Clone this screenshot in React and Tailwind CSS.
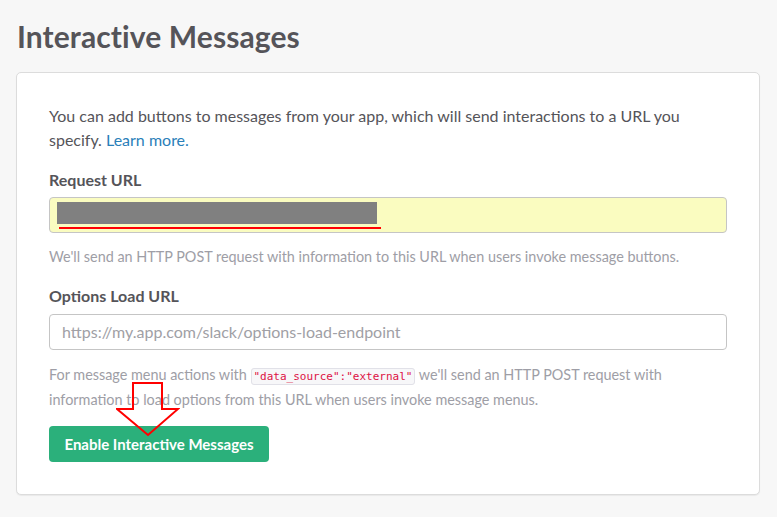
import React from 'react';

const Arrow = () => (
  <svg
    className="absolute left-[116px] top-[382px] pointer-events-none"
    width="64"
    height="56"
    viewBox="116 382 64 56"
  >
    <polygon
      points="133,383 162,383 162,409 178,409 148,435 117,409 133,409"
      fill="none"
      stroke="#ff0000"
      strokeWidth="2"
    />
  </svg>
);

const App = () => {
  return (
    <div className="relative min-h-[517px] bg-[#f7f7f7] px-4 pt-[14px] pb-[22px] font-['Lato','Noto_Sans',sans-serif] text-[#555459]">
      <h1 className="text-[30px] font-bold leading-[44px] tracking-[0.1px] text-[#555459] pl-px">
        Interactive Messages
      </h1>

      <div className="mt-[14px] w-[744px] rounded-[5px] border border-[#dcdcdc] bg-white px-8 pt-[31px] pb-[32px] shadow-[0_1px_1px_rgba(0,0,0,0.06)]">
        <p className="text-[16px] leading-[24px]">
          You can add buttons to messages from your app, which will send interactions to a URL you specify.{' '}
          <span className="text-[#2a80b9]">Learn more.</span>
        </p>

        <label className="mt-[16px] block text-[16px] font-bold leading-[24px]">Request URL</label>
        <div className="mt-[5px] flex h-[36px] flex-col justify-center rounded-[4px] border border-[#c5c5c5] bg-[#fafcc0] pl-[7px]">
          <div className="h-[22px] w-[320px] bg-[#808080]" />
          <div className="ml-[2px] mt-[3px] h-[2px] w-[322px] bg-[#ff0000]" />
        </div>
        <p className="mt-[13px] text-[14.4px] leading-[22px] text-[#9e9ea6]">
          We'll send an HTTP POST request with information to this URL when users invoke message buttons.
        </p>

        <label className="mt-[16px] block text-[16px] font-bold leading-[24px]">Options Load URL</label>
        <div className="mt-[6px] flex h-[36px] items-center rounded-[4px] border border-[#c5c5c5] bg-white pl-3 text-[16px] text-[#a0a0a5]">
          https://my.app.com/slack/options-load-endpoint
        </div>
        <p className="mt-[13px] text-[14.4px] leading-[23px] text-[#9e9ea6]">
          For message menu actions with{' '}
          <code className="rounded-[3px] border border-[#e1e1e8] bg-[#f7f7f9] px-[2px] py-px font-['DejaVu_Sans_Mono',monospace] text-[11px] text-[#dd1144]">
            "data_source":"external"
          </code>{' '}
          we'll send an HTTP POST request with
          <br />
          information to load options from this URL when users invoke message menus.
        </p>

        <button className="mt-[15px] h-[36px] w-[220px] rounded-[4px] bg-[#2bb07b] text-[15px] font-bold text-white">
          Enable Interactive Messages
        </button>
      </div>

      <Arrow />
    </div>
  );
};

export default App;
